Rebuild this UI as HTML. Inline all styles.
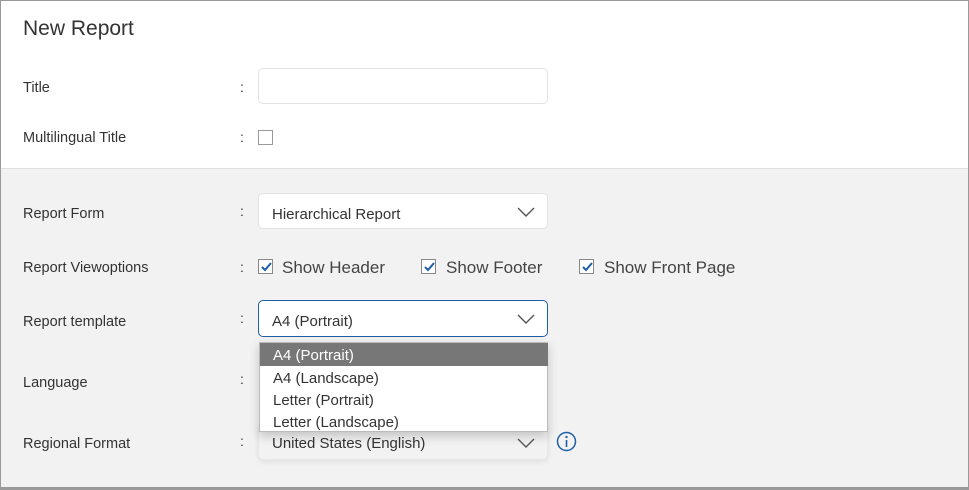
<!DOCTYPE html>
<html><head><style>
*{box-sizing:border-box;margin:0;padding:0}
body{width:969px;height:490px;overflow:hidden;font-family:"Liberation Sans",sans-serif;color:#333;background:#fff;position:relative}
.frame{position:absolute;left:0;top:0;width:969px;height:490px;border:1px solid #9a9a9a;border-bottom:3px solid #9a9a9a}
.gray{position:absolute;left:1px;top:168px;width:967px;height:319px;background:#f2f2f2;border-top:1px solid #e0e0e0}
.a{position:absolute;white-space:nowrap}
.lbl{font-size:14.5px;color:#333;left:23px}
.colon{font-size:14px;left:240px}
.inp{position:absolute;left:258px;width:290px;height:37px;background:#fff;border:1px solid #e3e3e3;border-radius:5px}
.sel{font-size:15px;color:#333;padding:12px 0 0 13px}
.chev{position:absolute;right:12px;top:12px}
.cb{position:absolute;width:15px;height:15px;border:1px solid #888;background:#fff}
.cb svg{position:absolute;left:1px;top:1px}
.opt{font-size:15px;color:#333;width:288px;height:22px;padding:4px 0 0 13px}
</style></head><body>
<div class="gray"></div>
<div class="frame"></div>
<div class="a" style="left:23px;top:17px;font-size:21px;color:#333">New Report</div>

<div class="a lbl" style="top:80px">Title</div><div class="a colon" style="top:79px">:</div>
<div class="inp" style="top:68px;height:36px"></div>

<div class="a lbl" style="top:130px">Multilingual Title</div><div class="a colon" style="top:129px">:</div>
<div class="cb" style="left:258px;top:130px;border-color:#999"></div>

<div class="a lbl" style="top:206px">Report Form</div><div class="a colon" style="top:203px">:</div>
<div class="inp sel" style="top:193px;height:36px">Hierarchical Report<svg class="chev" width="18" height="12" viewBox="0 0 18 12"><path d="M1 2l8 8 8-8" fill="none" stroke="#555" stroke-width="1.4"/></svg></div>

<div class="a lbl" style="top:260px">Report Viewoptions</div><div class="a colon" style="top:259px">:</div>
<div class="cb" style="left:258px;top:259px"><svg width="12" height="12"><path d="M2 6l3 3 6-7" fill="none" stroke="#1f5ea8" stroke-width="2"/></svg></div>
<div class="a" style="left:282px;top:258px;font-size:17px;color:#444">Show Header</div>
<div class="cb" style="left:421px;top:259px"><svg width="12" height="12"><path d="M2 6l3 3 6-7" fill="none" stroke="#1f5ea8" stroke-width="2"/></svg></div>
<div class="a" style="left:446px;top:258px;font-size:17px;color:#444">Show Footer</div>
<div class="cb" style="left:579px;top:259px"><svg width="12" height="12"><path d="M2 6l3 3 6-7" fill="none" stroke="#1f5ea8" stroke-width="2"/></svg></div>
<div class="a" style="left:604px;top:258px;font-size:17px;color:#444">Show Front Page</div>

<div class="a lbl" style="top:314px">Report template</div><div class="a colon" style="top:310px">:</div>
<div class="inp sel" style="top:300px;border-color:#1f5ea8">A4 (Portrait)<svg class="chev" width="18" height="12" viewBox="0 0 18 12"><path d="M1 2l8 8 8-8" fill="none" stroke="#555" stroke-width="1.4"/></svg></div>

<div class="a lbl" style="top:375px">Language</div><div class="a colon" style="top:371px">:</div>

<div class="a lbl" style="top:436px">Regional Format</div><div class="a colon" style="top:433px">:</div>
<div class="inp sel" style="top:424px;height:36px;background:#f2f2f2;border-color:#e6e6e6;padding-top:10px;box-shadow:0 2px 6px rgba(0,0,0,.08)">United States (English)<svg class="chev" width="18" height="12" viewBox="0 0 18 12"><path d="M1 2l8 8 8-8" fill="none" stroke="#555" stroke-width="1.4"/></svg></div>
<svg class="a" style="left:556px;top:431px" width="21" height="21"><circle cx="10.5" cy="10.5" r="9" fill="none" stroke="#1f5ea8" stroke-width="1.5"/><circle cx="10.5" cy="6" r="1.2" fill="#1f5ea8"/><path d="M10.5 9v7" stroke="#1f5ea8" stroke-width="1.6"/></svg>

<div class="a" style="left:259px;top:342px;width:289px;height:90px;background:#fff;border:1px solid #bbb;box-shadow:0 4px 10px rgba(0,0,0,.2)">
<div class="opt" style="background:#777;color:#fff;height:23px">A4 (Portrait)</div>
<div class="opt">A4 (Landscape)</div>
<div class="opt">Letter (Portrait)</div>
<div class="opt">Letter (Landscape)</div>
</div>
</body></html>
